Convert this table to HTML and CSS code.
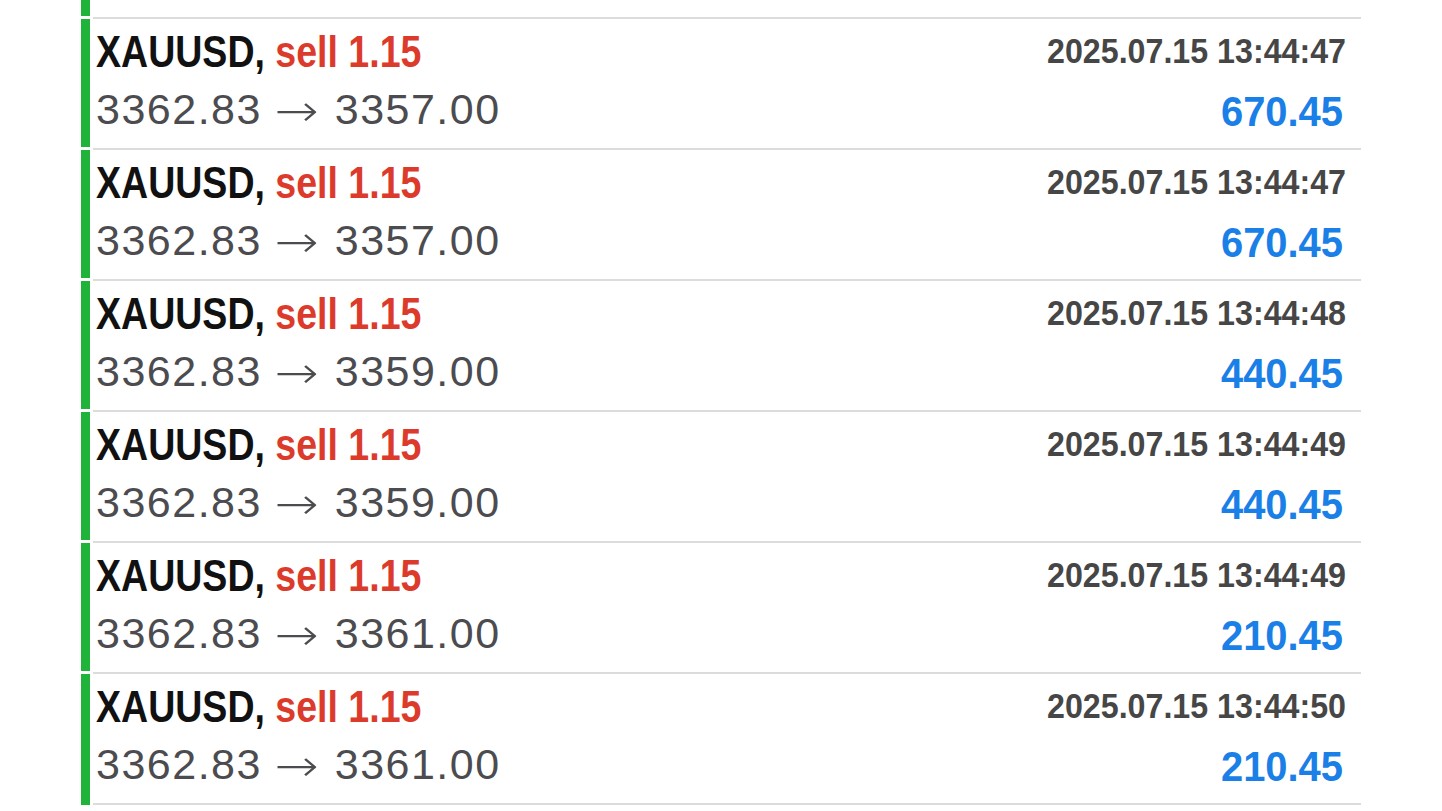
FILE: index.html
```html
<!DOCTYPE html>
<html lang="en">
<head>
    <meta charset="UTF-8"/>
    <title>History</title>
    <link rel="stylesheet" href="styles.css">
</head>
<body>
<div class="list">
    <div class="row row-cut">
        <div class="bar"></div>
    </div>

    <div class="row">
        <div class="bar"></div>
        <div class="deal">
            <div class="left">
                <div class="symbol">XAUUSD, <span class="sell">sell 1.15</span></div>
                <div class="prices">3362.83 <span class="arrow">→</span> 3357.00</div>
            </div>
            <div class="right">
                <div class="time">2025.07.15 13:44:47</div>
                <div class="profit">670.45</div>
            </div>
        </div>
    </div>

    <div class="row">
        <div class="bar"></div>
        <div class="deal">
            <div class="left">
                <div class="symbol">XAUUSD, <span class="sell">sell 1.15</span></div>
                <div class="prices">3362.83 <span class="arrow">→</span> 3357.00</div>
            </div>
            <div class="right">
                <div class="time">2025.07.15 13:44:47</div>
                <div class="profit">670.45</div>
            </div>
        </div>
    </div>

    <div class="row">
        <div class="bar"></div>
        <div class="deal">
            <div class="left">
                <div class="symbol">XAUUSD, <span class="sell">sell 1.15</span></div>
                <div class="prices">3362.83 <span class="arrow">→</span> 3359.00</div>
            </div>
            <div class="right">
                <div class="time">2025.07.15 13:44:48</div>
                <div class="profit">440.45</div>
            </div>
        </div>
    </div>

    <div class="row">
        <div class="bar"></div>
        <div class="deal">
            <div class="left">
                <div class="symbol">XAUUSD, <span class="sell">sell 1.15</span></div>
                <div class="prices">3362.83 <span class="arrow">→</span> 3359.00</div>
            </div>
            <div class="right">
                <div class="time">2025.07.15 13:44:49</div>
                <div class="profit">440.45</div>
            </div>
        </div>
    </div>

    <div class="row">
        <div class="bar"></div>
        <div class="deal">
            <div class="left">
                <div class="symbol">XAUUSD, <span class="sell">sell 1.15</span></div>
                <div class="prices">3362.83 <span class="arrow">→</span> 3361.00</div>
            </div>
            <div class="right">
                <div class="time">2025.07.15 13:44:49</div>
                <div class="profit">210.45</div>
            </div>
        </div>
    </div>

    <div class="row last">
        <div class="bar"></div>
        <div class="deal">
            <div class="left">
                <div class="symbol">XAUUSD, <span class="sell">sell 1.15</span></div>
                <div class="prices">3362.83 <span class="arrow">→</span> 3361.00</div>
            </div>
            <div class="right">
                <div class="time">2025.07.15 13:44:50</div>
                <div class="profit">210.45</div>
            </div>
        </div>
    </div>
</div>
</body>
</html>
```

FILE: styles.css
```css
body {
    margin: 0;
    background-color: #fff;
    font-family: 'Liberation Sans', Arial, sans-serif;
    overflow: hidden;
}

.list {
    margin-left: 81px;
    width: 1280px;
}

.row {
    display: flex;
}

.row-cut {
    height: 17px;
}

.bar {
    width: 9px;
    flex-shrink: 0;
    background-color: #1fb33a;
    margin: 2px 0 1px;
}

.row-cut .bar {
    margin: 0 0 1px;
}

.deal {
    flex: 1;
    display: flex;
    justify-content: space-between;
    margin-left: 3px;
    border-top: 2px solid #dcdcdc;
    padding: 6px 15px 11px 3px;
}

.row.last .deal {
    border-bottom: 2px solid #dcdcdc;
}

.row.last .bar {
    margin-bottom: 0;
}

/* condensed bold look: Liberation Sans Bold squeezed */
.symbol {
    font-weight: bold;
    font-size: 44px;
    line-height: 54px;
    color: #111;
    white-space: nowrap;
    transform: scaleX(0.853);
    transform-origin: left center;
}

.sell {
    color: #dc3b2c;
}

.prices {
    font-size: 43px;
    line-height: 56px;
    margin-top: 2px;
    color: #4c4c50;
    letter-spacing: 1.5px;
    white-space: nowrap;
}

.arrow {
    display: inline-block;
    font-family: 'DejaVu Sans', sans-serif;
    font-weight: 200;
    font-size: 44px;
    line-height: 30px;
    letter-spacing: 0;
    margin: 0 6px 0 3px;
    transform: translateY(2px) scaleX(1.2);
}

.right {
    text-align: right;
    padding-top: 4px;
}

.time {
    font-weight: bold;
    font-size: 35px;
    line-height: 44px;
    color: #464646;
    white-space: nowrap;
    transform: scaleX(0.92);
    transform-origin: right center;
}

.profit {
    font-weight: bold;
    font-size: 42px;
    line-height: 46px;
    margin-top: 16px;
    margin-right: 3px;
    color: #1a7fe6;
    white-space: nowrap;
    transform: scaleX(0.95);
    transform-origin: right center;
}
```
